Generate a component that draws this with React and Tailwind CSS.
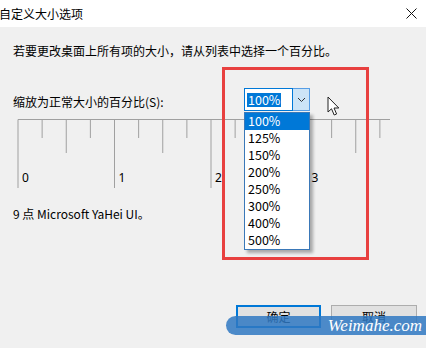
import React from "react";

const font = { fontFamily: '"Noto Sans CJK SC", "Noto Sans", sans-serif' };

const options = ["100%", "125%", "150%", "200%", "250%", "300%", "400%", "500%"];

function Ruler() {
  let ticks = [];
  for (let i = 0; i <= 15; i++) {
    let x = 18 + i * 24.125;
    let y2 = i % 4 === 0 ? 77 : i % 2 === 0 ? 42 : 27;
    ticks.push(
      <line key={i} x1={x} y1={8.5} x2={x} y2={y2} stroke="#a0a0a0" strokeWidth="1" />
    );
  }
  return (
    <svg width="426" height="80" className="block">
      <line x1="18" y1="8.5" x2="390" y2="8.5" stroke="#a0a0a0" strokeWidth="1" />
      {ticks}
      {["0", "1", "2", "3"].map((t, i) => (
        <text
          key={t}
          x={22 + i * 96.5}
          y={71}
          fontSize="12"
          fill="#000"
          fontFamily='"Noto Sans", sans-serif'
        >
          {t}
        </text>
      ))}
    </svg>
  );
}

function Combo() {
  return (
    <div className="relative w-[66px] h-[23px] flex">
      <div className="flex-1 h-full bg-white border border-[#0078d7] flex items-center pl-[2px]">
        <span className="bg-[#0078d7] text-white text-[12.5px] leading-[14px] px-[1px]">100%</span>
      </div>
      <div className="w-[17px] h-full bg-[#cce4f7] border border-[#569de5] border-l-0 flex items-center justify-center">
        <svg width="9" height="6" viewBox="0 0 9 6">
          <path d="M1 1 L4.5 4.5 L8 1" fill="none" stroke="#333" strokeWidth="1" />
        </svg>
      </div>
      <div className="absolute left-0 top-[24px] w-[66px] bg-white border border-[#3a78b8] shadow-[3px_3px_3px_rgba(0,0,0,0.3)] z-10">
        {options.map((o, i) => (
          <div
            key={o}
            className={
              "h-[17px] flex items-center pl-[3px] text-[12.5px] " +
              (i === 0 ? "bg-[#0078d7] text-white" : "text-[#000]")
            }
          >
            {o}
          </div>
        ))}
      </div>
    </div>
  );
}

export default function App() {
  return (
    <div className="relative w-[426px] h-[348px] overflow-hidden bg-[#f0f0f0] text-black" style={font}>
      <div className="h-[27px] bg-white flex items-center justify-between pr-[9px]">
        <span className="text-[12px] ml-[-1px]">自定义大小选项</span>
        <svg width="11" height="11" viewBox="0 0 11 11">
          <path d="M0.5 0.5 L10.5 10.5 M10.5 0.5 L0.5 10.5" stroke="#111" strokeWidth="1" />
        </svg>
      </div>

      <div className="flex flex-col">
        <p className="mt-[15px] ml-[13px] text-[12px] leading-[17px]">
          若要更改桌面上所有项的大小，请从列表中选择一个百分比。
        </p>

        <div className="mt-[29px] flex items-center h-[23px] relative z-10">
          <span className="w-[244px] shrink-0 pl-[13px] text-[12px] leading-[17px] pt-[3px]">缩放为正常大小的百分比(S):</span>
          <Combo />
        </div>

        <Ruler />

        <p className="mt-[14px] ml-[13px] text-[12px] leading-[17px]">9 点 Microsoft YaHei UI。</p>

        <div className="mt-[83px] flex justify-end gap-[10px] pr-[9px]">
          <button className="w-[85px] h-[23px] bg-[#e1e1e1] border-2 border-[#0078d7] text-[12px]">确定</button>
          <button className="w-[86px] h-[23px] bg-[#e1e1e1] border border-[#adadad] text-[12px]">取消</button>
        </div>
      </div>

      {/* red annotation box */}
      <div className="absolute left-[222px] top-[67px] w-[147px] h-[193px] border-[3px] border-[#e8403f] z-20 pointer-events-none" />

      {/* mouse cursor */}
      <svg className="absolute left-[327px] top-[96px] z-20" width="14" height="21" viewBox="0 0 14 21">
        <path
          d="M1 1 L1 16 L4.5 12.8 L7.2 19 L9.6 18 L7 12 L11.8 12 Z"
          fill="#fff"
          stroke="#222"
          strokeWidth="1"
          strokeLinejoin="round"
        />
      </svg>

      {/* watermark */}
      <div className="absolute left-[226px] top-[316px] w-[210px] h-[19px] rounded-l-full bg-[#2f78c2]/85 z-30 flex items-center justify-end pr-[14px]">
        <span className="text-white italic text-[17px] leading-none" style={{ fontFamily: '"Liberation Serif", serif' }}>
          Weimahe.com
        </span>
      </div>
    </div>
  );
}
